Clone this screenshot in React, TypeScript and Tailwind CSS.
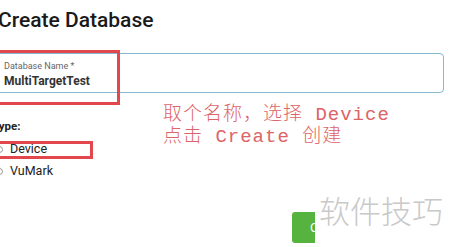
import React from "react";

export default function App() {
  return (
    <div className="relative w-[450px] h-[247px] overflow-hidden bg-white" style={{ fontFamily: "Roboto, 'Noto Sans', sans-serif" }}>
      <div className="flex flex-col">
        <h1 className="ml-[-2px] mt-[7px] h-[26px] text-[21px] leading-[26px] font-medium text-[#1a1a1a]">Create Database</h1>
        <div className="ml-[-10px] mt-[20px] w-[454px] h-[40px] rounded-[4px] border border-[#86b9cf] pl-[13px] pt-[7px]">
          <div className="text-[9px] leading-[11px] text-[#666]">Database Name *</div>
          <div className="mt-[2px] text-[12px] leading-[15px] font-bold text-[#333]">MultiTargetTest</div>
        </div>
        <div className="ml-[-8px] mt-[26px] text-[11.5px] leading-[14px] font-bold text-[#222]">Type:</div>
        <div className="mt-[8px] flex flex-col gap-[6px]">
          <div className="flex items-center gap-[7px] ml-[-4px] h-[16px]">
            <span className="w-[7px] h-[7px] rounded-full border border-[#999]" />
            <span className="text-[12.5px] leading-[16px] text-[#222]">Device</span>
          </div>
          <div className="flex items-center gap-[7px] ml-[-4px] h-[16px]">
            <span className="w-[7px] h-[7px] rounded-full border border-[#999]" />
            <span className="text-[12.5px] leading-[16px] text-[#222]">VuMark</span>
          </div>
        </div>
      </div>

      {/* red annotation boxes */}
      <div className="absolute left-[-4px] top-[50px] w-[124px] h-[55px] border-[3px] border-[#e1474d]" />
      <div className="absolute left-[-4px] top-[141px] w-[97px] h-[18px] border-[3px] border-[#e1474d]" />

      {/* annotation note */}
      <div
        className="absolute left-[163px] top-[104px] text-[19px] leading-[22px] tracking-[1px] text-[#dc6468] whitespace-pre"
        style={{ fontFamily: "'Liberation Mono', 'Noto Sans CJK SC', monospace", fontWeight: 300 }}
      >
        <div>取个名称，选择 Device</div>
        <div>点击 Create 创建</div>
      </div>

      {/* green button */}
      <div className="absolute left-[292px] top-[212px] w-[60px] h-[31px] rounded-[3px] bg-[#56b33f] flex items-center pl-[18px] text-white text-[13px]">
        Create
      </div>
      <div className="absolute left-[315px] top-[195px] w-[140px] h-[52px] bg-white" />

      {/* watermark */}
      <div
        className="absolute left-[319px] top-[190px] text-[31px] leading-[40px] text-[#c9c9c9]"
        style={{ fontFamily: "'Noto Sans CJK SC', sans-serif", fontWeight: 300 }}
      >
        软件技巧
      </div>
    </div>
  );
}
